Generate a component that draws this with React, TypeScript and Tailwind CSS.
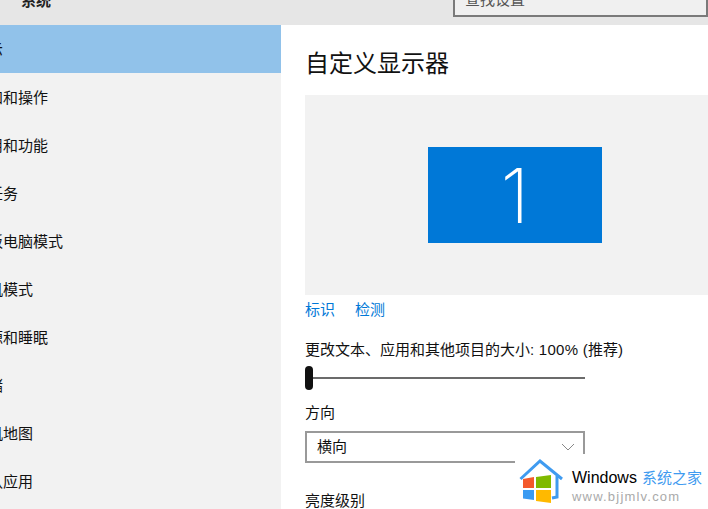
const items = ["显示", "通知和操作", "应用和功能", "多任务", "平板电脑模式", "飞机模式", "电源和睡眠", "存储", "脱机地图", "默认应用"];

function Logo() {
  return (
    <svg width="48" height="46" viewBox="0 0 48 46" className="shrink-0">
      <path d="M1.5 20 L21 2 L43 20" fill="none" stroke="#3f9bf0" strokeWidth="3" />
      <path d="M38 17 V38 L33 39" fill="none" stroke="#3f9bf0" strokeWidth="3" />
      <path d="M4 20 L15 18 V29 H4 Z" fill="#f4592b" />
      <path d="M17 18 L32 16 V29 H17 Z" fill="#7fba00" />
      <path d="M4 31 H15 V41 L4 39.5 Z" fill="#3a9bf2" />
      <path d="M17 31 H32 V44 L17 42 Z" fill="#ffb900" />
    </svg>
  );
}

export default function App() {
  return (
    <div className="relative w-[708px] h-[509px] overflow-hidden bg-white text-[15px] text-[#111] font-['Liberation_Sans','Noto_Sans_CJK_SC',sans-serif]">
      <header className="h-[25px] bg-[#e6e6e6] flex items-end overflow-hidden">
        <div className="w-[453px] shrink-0 pl-[21px] pb-[14px] font-bold text-[15px] leading-5 text-[#222]">系统</div>
        <div className="flex-1 h-[40px] mb-[8px] border-2 border-[#7a7a7a] bg-[#f0f0f0] pl-[10px] pt-[11px] text-[15px] leading-5 text-[#555]">查找设置</div>
      </header>
      <div className="flex h-[484px]">
        <nav className="w-[281px] shrink-0 bg-[#f2f2f2] overflow-hidden">
          {items.map((item, i) => (
            <div key={item} className={`h-[48px] flex items-center pt-[2px] ${i === 0 ? "bg-[#91c2ea]" : ""}`}>
              <span className="ml-[-27px] whitespace-nowrap leading-5">{item}</span>
            </div>
          ))}
        </nav>
        <main className="flex-1 pl-6 min-w-0">
          <h1 className="text-[24px] leading-8 mt-[23px] text-[#111]">自定义显示器</h1>
          <div className="mt-[15px] h-[200px] bg-[#f2f2f2] flex items-center justify-center pl-[17px]">
            <div className="w-[174px] h-[96px] bg-[#0078d7] flex items-center justify-center text-white text-[76px] font-['Inter',sans-serif] font-extralight leading-none">1</div>
          </div>
          <div className="flex gap-5 mt-[5px] text-[#0078d7] leading-5">
            <span>标识</span>
            <span>检测</span>
          </div>
          <div className="mt-[20px] leading-5">更改文本、应用和其他项目的大小<span className="tracking-[0.25px]">: 100% (</span>推荐)</div>
          <div className="relative w-[280px] h-[24px] mt-[6px] flex items-center">
            <div className="w-full h-[2px] bg-[#6b6b6b]" />
            <div className="absolute left-0 top-0 w-[8px] h-[24px] rounded-full bg-[#111]" />
          </div>
          <div className="mt-[13px] leading-5">方向</div>
          <div className="mt-[8px] w-[280px] h-[32px] border-2 border-[#999] flex items-center justify-between pl-[10px] pr-[8px]">
            <span className="leading-5">横向</span>
            <svg width="14" height="8" viewBox="0 0 14 8"><path d="M1 1 L7 7 L13 1" fill="none" stroke="#888" strokeWidth="1" /></svg>
          </div>
          <div className="mt-[28px] leading-5">亮度级别</div>
        </main>
      </div>
      <div className="absolute left-[515px] top-[454px] w-[193px] h-[55px] bg-white flex items-start pl-[4px] pt-[5px] gap-[5px]">
        <Logo />
        <div className="flex flex-col mt-[7px]">
          <div className="flex items-center whitespace-nowrap">
            <span className="text-[16px] leading-6 text-black">Windows</span>
            <span className="ml-[5px] text-[15px] leading-6 text-[#3f9bf0]">系统之家</span>
          </div>
          <div className="text-[13px] leading-4 mt-[-1px] tracking-[1.2px] text-[#aaa]">www.bjjmlv.com</div>
        </div>
      </div>
    </div>
  );
}
